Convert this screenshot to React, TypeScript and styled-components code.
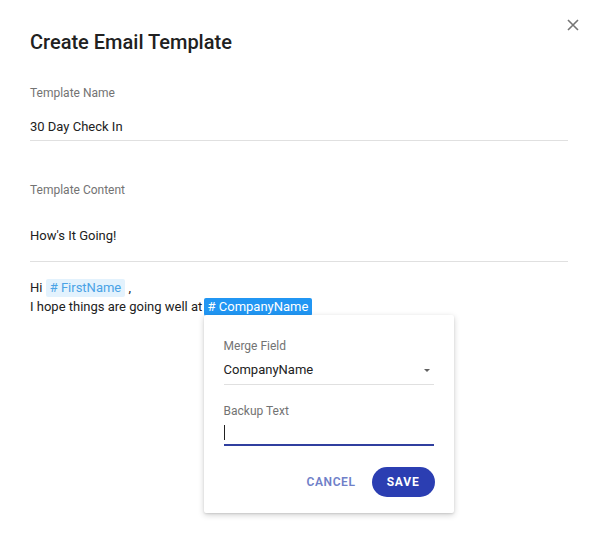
import React from 'react'
import styled, { createGlobalStyle } from 'styled-components'

const GlobalStyle = createGlobalStyle`
  html, body {
    margin: 0;
    padding: 0;
    background: #ffffff;
  }
  body {
    font-family: Roboto, "Liberation Sans", sans-serif;
    color: #212121;
  }
`

export default function App() {
  return (
    <>
      <GlobalStyle />
      <Dialog>
        <Header>
          <Title>Create Email Template</Title>
          <CloseButton aria-label="close">
            <svg width="12" height="12" viewBox="0 0 12 12">
              <path d="M1 1L11 11M11 1L1 11" stroke="#757575" strokeWidth="1.6" />
            </svg>
          </CloseButton>
        </Header>

        <Field $gap={31}>
          <Label>Template Name</Label>
          <Value $pad={3}>30 Day Check In</Value>
        </Field>

        <Field $gap={41}>
          <Label>Template Content</Label>
          <Value $pad={15} $top={28}>How's It Going!</Value>
        </Field>

        <Body>
          Hi <Chip>#&nbsp;FirstName</Chip> ,
          <br />
          I hope things are going well at{' '}
          <Anchor>
            <Chip $active>#&nbsp;CompanyName</Chip>
            <Popover>
              <Label>Merge Field</Label>
              <SelectRow>
                <span>CompanyName</span>
                <Caret />
              </SelectRow>
              <Label $top={18}>Backup Text</Label>
              <BackupInput>
                <Cursor />
              </BackupInput>
              <Actions>
                <CancelButton>Cancel</CancelButton>
                <SaveButton>Save</SaveButton>
              </Actions>
            </Popover>
          </Anchor>
        </Body>
      </Dialog>
    </>
  )
}

const Dialog = styled.div`
  width: 598px;
  height: 550px;
  box-sizing: border-box;
  padding: 30px 30px 0 30px;
`

const Header = styled.div`
  display: flex;
  justify-content: space-between;
  align-items: flex-start;
  margin-right: -11px;
`

const Title = styled.h1`
  margin: 0;
  font-size: 20px;
  line-height: 24px;
  font-weight: 500;
  color: #212121;
`

const CloseButton = styled.button`
  display: flex;
  border: none;
  background: none;
  padding: 0;
  margin-top: -11px;
  cursor: pointer;
`

const Field = styled.div<{ $gap: number }>`
  display: flex;
  flex-direction: column;
  margin-top: ${(p) => p.$gap}px;
`

const Label = styled.div<{ $top?: number }>`
  font-size: 12px;
  line-height: 16px;
  font-weight: 400;
  color: #737373;
  margin-top: ${(p) => p.$top ?? 0}px;
`

const Value = styled.div<{ $pad: number; $top?: number }>`
  margin-top: ${(p) => p.$top ?? 16}px;
  font-size: 13px;
  line-height: 20px;
  padding-bottom: ${(p) => p.$pad}px;
  border-bottom: 1px solid #e0e0e0;
`

const Body = styled.div`
  margin-top: 16px;
  font-size: 13px;
  line-height: 19px;
  color: #212121;
`

const Chip = styled.span<{ $active?: boolean }>`
  display: inline-block;
  line-height: 18px;
  padding: 0 4px;
  border-radius: 2px;
  background: ${(p) => (p.$active ? '#2196f3' : '#e3f2fd')};
  color: ${(p) => (p.$active ? '#ffffff' : '#4aa3e6')};
`

const Anchor = styled.span`
  position: relative;
  display: inline-block;
  margin-left: -2px;
`

const Popover = styled.div`
  position: absolute;
  left: 0;
  top: 18px;
  width: 250px;
  box-sizing: border-box;
  padding: 23px 20px 16px 20px;
  background: #ffffff;
  border-radius: 2px;
  box-shadow: 0 2px 6px rgba(0, 0, 0, 0.18), 0 1px 2px rgba(0, 0, 0, 0.1);
  display: flex;
  flex-direction: column;
  line-height: normal;
`

const SelectRow = styled.div`
  display: flex;
  justify-content: space-between;
  align-items: center;
  margin-top: 6px;
  font-size: 13px;
  line-height: 20px;
  color: #212121;
  padding-bottom: 4px;
  border-bottom: 1px solid #e0e0e0;
`

const Caret = styled.span`
  width: 0;
  height: 0;
  margin-right: 4px;
  border-left: 3px solid transparent;
  border-right: 3px solid transparent;
  border-top: 3px solid #616161;
`

const BackupInput = styled.div`
  height: 19px;
  margin-top: 6px;
  border-bottom: 2px solid #303f9f;
  display: flex;
  align-items: flex-start;
`

const Cursor = styled.span`
  width: 1px;
  height: 15px;
  background: #212121;
`

const Actions = styled.div`
  display: flex;
  justify-content: flex-end;
  align-items: center;
  gap: 16px;
  margin-top: 21px;
  margin-right: -1px;
`

const CancelButton = styled.button`
  border: none;
  background: none;
  padding: 0;
  font-family: inherit;
  font-size: 12px;
  font-weight: 600;
  letter-spacing: 0.6px;
  text-transform: uppercase;
  color: #6f7fc8;
`

const SaveButton = styled.button`
  border: none;
  height: 30px;
  width: 63px;
  border-radius: 15px;
  background: #2b3eb2;
  font-family: inherit;
  font-size: 12px;
  font-weight: 700;
  letter-spacing: 0.8px;
  text-transform: uppercase;
  color: #ffffff;
`
